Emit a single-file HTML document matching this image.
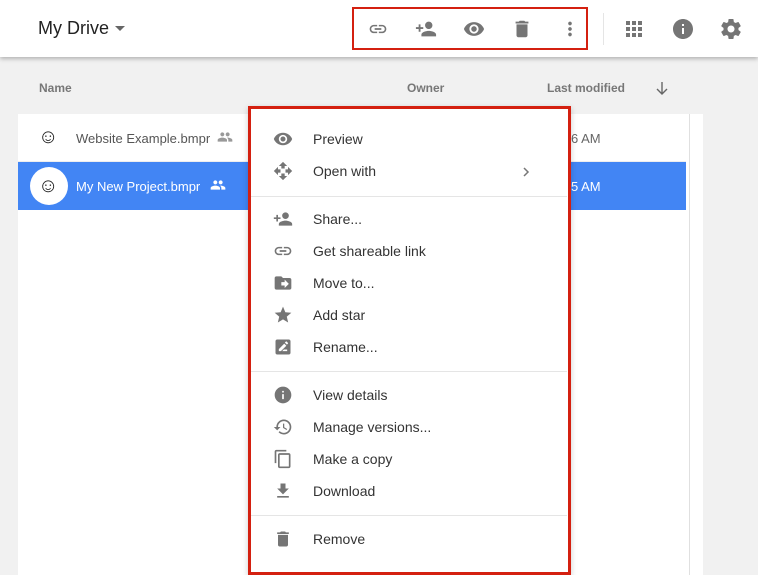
<!DOCTYPE html>
<html><head><style>
*{margin:0;padding:0;box-sizing:border-box}
body{width:758px;height:575px;background:#f1f1f1;font-family:"Liberation Sans",sans-serif;position:relative;overflow:hidden}
.hdr{position:absolute;left:0;top:0;width:758px;height:57px;background:#fff;box-shadow:0 2px 4px rgba(0,0,0,.25)}
.abs{position:absolute}
svg{position:absolute}
.g{fill:#757575}
.mi{position:absolute;left:313px;font-size:14px;color:#333;line-height:16px}
.sep{position:absolute;left:251px;width:316px;height:1px;background:#e5e5e5}
.col{position:absolute;font-size:12px;font-weight:bold;color:#777}
</style></head><body>
<div class="hdr">
<div class="abs" style="left:38px;top:18px;font-size:18px;color:#222;">My Drive</div>
<svg style="left:115px;top:26px" width="10" height="5"><path d="M0 0h10L5 5z" fill="#666"/></svg>
<div class="abs" style="left:352px;top:7px;width:236px;height:43px;border:2px solid #d42010"></div>
<svg style="left:368px;top:19px" width="20" height="20" viewBox="0 0 24 24"><path class="g" d="M3.9 12c0-1.71 1.39-3.1 3.1-3.1h4V7H7c-2.76 0-5 2.24-5 5s2.24 5 5 5h4v-1.9H7c-1.71 0-3.1-1.39-3.1-3.1zM8 13h8v-2H8v2zm9-6h-4v1.9h4c1.71 0 3.1 1.39 3.1 3.1s-1.39 3.1-3.1 3.1h-4V17h4c2.76 0 5-2.24 5-5s-2.24-5-5-5z"/></svg>
<svg style="left:415px;top:18px" width="22" height="22" viewBox="0 0 24 24"><path class="g" d="M15 12c2.21 0 4-1.79 4-4s-1.79-4-4-4-4 1.79-4 4 1.79 4 4 4zm-9-2V7H4v3H1v2h3v3h2v-3h3v-2H6zm9 4c-2.67 0-8 1.34-8 4v2h16v-2c0-2.66-5.33-4-8-4z"/></svg>
<svg style="left:463px;top:18px" width="22" height="22" viewBox="0 0 24 24"><path class="g" d="M12 4.5C7 4.5 2.73 7.61 1 12c1.73 4.39 6 7.5 11 7.5s9.27-3.11 11-7.5c-1.73-4.39-6-7.5-11-7.5zM12 17c-2.76 0-5-2.24-5-5s2.24-5 5-5 5 2.24 5 5-2.24 5-5 5zm0-8c-1.66 0-3 1.34-3 3s1.34 3 3 3 3-1.34 3-3-1.34-3-3-3z"/></svg>
<svg style="left:511px;top:18px" width="22" height="22" viewBox="0 0 24 24"><path class="g" d="M6 19c0 1.1.9 2 2 2h8c1.1 0 2-.9 2-2V7H6v12zM19 4h-3.5l-1-1h-5l-1 1H5v2h14V4z"/></svg>
<svg style="left:559px;top:18px" width="22" height="22" viewBox="0 0 24 24"><path class="g" d="M12 8c1.1 0 2-.9 2-2s-.9-2-2-2-2 .9-2 2 .9 2 2 2zm0 2c-1.1 0-2 .9-2 2s.9 2 2 2 2-.9 2-2-.9-2-2-2zm0 6c-1.1 0-2 .9-2 2s.9 2 2 2 2-.9 2-2-.9-2-2-2z"/></svg>
<div class="abs" style="left:603px;top:13px;width:1px;height:32px;background:#e5e5e5"></div>
<svg style="left:626px;top:21px" width="16" height="16" viewBox="0 0 16 16"><path class="g" d="M0 0h4v4H0zM6 0h4v4H6zM12 0h4v4h-4zM0 6h4v4H0zM6 6h4v4H6zM12 6h4v4h-4zM0 12h4v4H0zM6 12h4v4H6zM12 12h4v4h-4z"/></svg>
<svg style="left:671px;top:17px" width="24" height="24" viewBox="0 0 24 24"><path class="g" d="M12 2C6.48 2 2 6.48 2 12s4.48 10 10 10 10-4.48 10-10S17.52 2 12 2zm1 15h-2v-6h2v6zm0-8h-2V7h2v2z"/></svg>
<svg style="left:719px;top:17px" width="24" height="24" viewBox="0 0 24 24"><path class="g" d="M19.43 12.98c.04-.32.07-.64.07-.98s-.03-.66-.07-.98l2.11-1.65c.19-.15.24-.42.12-.64l-2-3.46c-.12-.22-.39-.3-.61-.22l-2.49 1c-.52-.4-1.08-.73-1.69-.98l-.38-2.65C14.46 2.18 14.25 2 14 2h-4c-.25 0-.46.18-.49.42l-.38 2.65c-.61.25-1.17.59-1.69.98l-2.49-1c-.23-.09-.49 0-.61.22l-2 3.46c-.13.22-.07.49.12.64l2.11 1.65c-.04.32-.07.65-.07.98s.03.66.07.98l-2.11 1.65c-.19.15-.24.42-.12.64l2 3.46c.12.22.39.3.61.22l2.49-1c.52.4 1.08.73 1.69.98l.38 2.65c.03.24.24.42.49.42h4c.25 0 .46-.18.49-.42l.38-2.65c.61-.25 1.17-.59 1.69-.98l2.49 1c.23.09.49 0 .61-.22l2-3.46c.12-.22.07-.49-.12-.64l-2.11-1.65zM12 15.5c-1.93 0-3.5-1.57-3.5-3.5s1.57-3.5 3.5-3.5 3.5 1.57 3.5 3.5-1.57 3.5-3.5 3.5z"/></svg>
</div>
<div class="col" style="left:39px;top:81px">Name</div>
<div class="col" style="left:407px;top:81px">Owner</div>
<div class="col" style="left:547px;top:81px">Last modified</div>
<svg style="left:656px;top:82px" width="12" height="14"><path d="M6 0v12M1 7l5 5 5-5" stroke="#666" stroke-width="1.4" fill="none"/></svg>
<div class="abs" style="left:18px;top:114px;width:685px;height:461px;background:#fff"></div>
<div class="abs" style="left:689px;top:114px;width:1px;height:461px;background:#e0e0e0"></div>
<div class="abs" style="left:18px;top:161px;width:668px;height:1px;background:#eee"></div>
<div class="abs" style="left:18px;top:162px;width:668px;height:48px;background:#4285f4"></div>
<div class="abs" style="left:30px;top:167px;width:38px;height:38px;border-radius:50%;background:#fff"></div>
<div class="abs" style="left:38px;top:125px;font-size:20px;color:#222;line-height:24px">☺</div>
<div class="abs" style="left:38px;top:174px;font-size:20px;color:#222;line-height:24px">☺</div>
<div class="abs" style="left:76px;top:131px;font-size:13px;color:#555">Website Example.bmpr</div>
<div class="abs" style="left:76px;top:179px;font-size:13px;color:#fff">My New Project.bmpr</div>
<svg style="left:217px;top:131px" width="16" height="12" viewBox="0 0 24 18"><path fill="#999" d="M16 8c1.66 0 2.99-1.34 2.99-3S17.66 2 16 2c-1.66 0-3 1.34-3 3s1.34 3 3 3zm-8 0c1.66 0 2.99-1.34 2.99-3S9.66 2 8 2C6.34 2 5 3.34 5 5s1.34 3 3 3zm0 2c-2.33 0-7 1.17-7 3.5V16h14v-2.5c0-2.33-4.67-3.5-7-3.5zm8 0c-.29 0-.62.02-.97.05 1.16.84 1.97 1.97 1.97 3.45V16h6v-2.5c0-2.33-4.67-3.5-7-3.5z"/></svg>
<svg style="left:210px;top:179px" width="16" height="12" viewBox="0 0 24 18"><path fill="#fff" d="M16 8c1.66 0 2.99-1.34 2.99-3S17.66 2 16 2c-1.66 0-3 1.34-3 3s1.34 3 3 3zm-8 0c1.66 0 2.99-1.34 2.99-3S9.66 2 8 2C6.34 2 5 3.34 5 5s1.34 3 3 3zm0 2c-2.33 0-7 1.17-7 3.5V16h14v-2.5c0-2.33-4.67-3.5-7-3.5zm8 0c-.29 0-.62.02-.97.05 1.16.84 1.97 1.97 1.97 3.45V16h6v-2.5c0-2.33-4.67-3.5-7-3.5z"/></svg>
<div class="abs" style="left:571px;top:131px;font-size:13px;color:#666">6 AM</div>
<div class="abs" style="left:571px;top:179px;font-size:13px;color:#fff">5 AM</div>

<div class="abs" style="left:248px;top:106px;width:323px;height:469px;background:#fff;border:3px solid #d42010;box-shadow:0 2px 6px rgba(0,0,0,.2)"></div>
<div class="sep" style="top:196px"></div>
<div class="sep" style="top:371px"></div>
<div class="sep" style="top:515px"></div>
<svg style="left:273px;top:129px" width="20" height="20" viewBox="0 0 24 24"><path class="g" d="M12 4.5C7 4.5 2.73 7.61 1 12c1.73 4.39 6 7.5 11 7.5s9.27-3.11 11-7.5c-1.73-4.39-6-7.5-11-7.5zM12 17c-2.76 0-5-2.24-5-5s2.24-5 5-5 5 2.24 5 5-2.24 5-5 5zm0-8c-1.66 0-3 1.34-3 3s1.34 3 3 3 3-1.34 3-3-1.34-3-3-3z"/></svg>
<svg style="left:273px;top:161px" width="20" height="20" viewBox="0 0 24 24"><path class="g" d="M10 9h4V6h3l-5-5-5 5h3v3zm-1 1H6V7l-5 5 5 5v-3h3v-4zm14 2l-5-5v3h-3v4h3v3l5-5zm-9 3h-4v3H7l5 5 5-5h-3v-3z"/></svg>
<svg style="left:521px;top:166px" width="10" height="12"><path d="M3 2l4 4-4 4" stroke="#777" stroke-width="1.5" fill="none"/></svg>
<svg style="left:273px;top:209px" width="20" height="20" viewBox="0 0 24 24"><path class="g" d="M15 12c2.21 0 4-1.79 4-4s-1.79-4-4-4-4 1.79-4 4 1.79 4 4 4zm-9-2V7H4v3H1v2h3v3h2v-3h3v-2H6zm9 4c-2.67 0-8 1.34-8 4v2h16v-2c0-2.66-5.33-4-8-4z"/></svg>
<svg style="left:273px;top:241px" width="20" height="20" viewBox="0 0 24 24"><path class="g" d="M3.9 12c0-1.71 1.39-3.1 3.1-3.1h4V7H7c-2.76 0-5 2.24-5 5s2.24 5 5 5h4v-1.9H7c-1.71 0-3.1-1.39-3.1-3.1zM8 13h8v-2H8v2zm9-6h-4v1.9h4c1.71 0 3.1 1.39 3.1 3.1s-1.39 3.1-3.1 3.1h-4V17h4c2.76 0 5-2.24 5-5s-2.24-5-5-5z"/></svg>
<svg style="left:273px;top:273px" width="20" height="20" viewBox="0 0 24 24"><path class="g" d="M20 6h-8l-2-2H4c-1.1 0-2 .9-2 2v12c0 1.1.9 2 2 2h16c1.1 0 2-.9 2-2V8c0-1.1-.9-2-2-2zm-6 12v-3h-4v-4h4V8l5 5-5 5z"/></svg>
<svg style="left:273px;top:305px" width="20" height="20" viewBox="0 0 24 24"><path class="g" d="M12 17.27L18.18 21l-1.64-7.03L22 9.24l-7.19-.61L12 2 9.19 8.63 2 9.24l5.46 4.73L5.82 21z"/></svg>
<svg style="left:273px;top:337px" width="20" height="20" viewBox="0 0 24 24"><path class="g" d="M19 3H5c-1.1 0-2 .9-2 2v14c0 1.1.9 2 2 2h14c1.1 0 2-.9 2-2V5c0-1.1-.9-2-2-2zM7 17v-2.5l6.5-6.5 2.5 2.5L9.5 17H7zm10 0h-6l2-2h4v2zm-.3-7.8l-2.5-2.5 1.2-1.2c.3-.3.7-.3 1 0l1.5 1.5c.3.3.3.7 0 1l-1.2 1.2z"/></svg>
<svg style="left:273px;top:385px" width="20" height="20" viewBox="0 0 24 24"><path class="g" d="M12 2C6.48 2 2 6.48 2 12s4.48 10 10 10 10-4.48 10-10S17.52 2 12 2zm1 15h-2v-6h2v6zm0-8h-2V7h2v2z"/></svg>
<svg style="left:273px;top:417px" width="20" height="20" viewBox="0 0 24 24"><path class="g" d="M13 3c-4.97 0-9 4.03-9 9H1l3.89 3.89.07.14L9 12H6c0-3.87 3.13-7 7-7s7 3.13 7 7-3.13 7-7 7c-1.93 0-3.68-.79-4.94-2.06l-1.42 1.42C8.27 19.99 10.51 21 13 21c4.97 0 9-4.03 9-9s-4.03-9-9-9zm-1 5v5l4.28 2.54.72-1.21-3.5-2.08V8H12z"/></svg>
<svg style="left:273px;top:449px" width="20" height="20" viewBox="0 0 24 24"><path class="g" d="M16 1H4c-1.1 0-2 .9-2 2v14h2V3h12V1zm3 4H8c-1.1 0-2 .9-2 2v14c0 1.1.9 2 2 2h11c1.1 0 2-.9 2-2V7c0-1.1-.9-2-2-2zm0 16H8V7h11v14z"/></svg>
<svg style="left:273px;top:481px" width="20" height="20" viewBox="0 0 24 24"><path class="g" d="M19 9h-4V3H9v6H5l7 7 7-7zM5 18v2h14v-2H5z"/></svg>
<svg style="left:273px;top:529px" width="20" height="20" viewBox="0 0 24 24"><path class="g" d="M6 19c0 1.1.9 2 2 2h8c1.1 0 2-.9 2-2V7H6v12zM19 4h-3.5l-1-1h-5l-1 1H5v2h14V4z"/></svg>
<div class="mi" style="top:131px">Preview</div>
<div class="mi" style="top:163px">Open with</div>
<div class="mi" style="top:211px">Share...</div>
<div class="mi" style="top:243px">Get shareable link</div>
<div class="mi" style="top:275px">Move to...</div>
<div class="mi" style="top:307px">Add star</div>
<div class="mi" style="top:339px">Rename...</div>
<div class="mi" style="top:387px">View details</div>
<div class="mi" style="top:419px">Manage versions...</div>
<div class="mi" style="top:451px">Make a copy</div>
<div class="mi" style="top:483px">Download</div>
<div class="mi" style="top:531px">Remove</div>
</body></html>
